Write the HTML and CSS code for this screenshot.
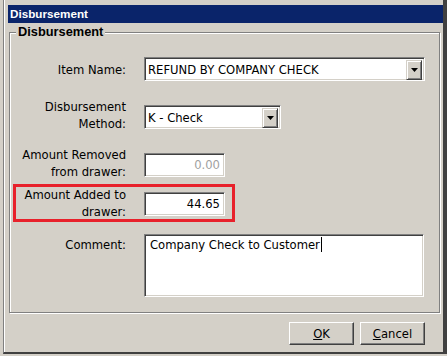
FILE: index.html
```html
<!DOCTYPE html>
<html lang="en">
<head>
    <meta charset="UTF-8">
    <title>Disbursement</title>
    <link rel="stylesheet" href="styles.css">
</head>
<body>

    <div class="window">
        <div class="titlebar">Disbursement</div>

        <fieldset class="group">
            <legend>Disbursement</legend>

            <div class="row row-single">
                <label class="label">Item Name:</label>
                <div class="select sunken item-select">
                    <span class="select-text">REFUND BY COMPANY CHECK</span>
                    <span class="drop-btn"><svg width="7" height="4" viewBox="0 0 7 4"><polygon points="0,0 7,0 3.5,4" fill="#000"/></svg></span>
                </div>
            </div>

            <div class="row row-double">
                <label class="label">Disbursement<br>Method:</label>
                <div class="select sunken method-select">
                    <span class="select-text">K - Check</span>
                    <span class="drop-btn"><svg width="7" height="4" viewBox="0 0 7 4"><polygon points="0,0 7,0 3.5,4" fill="#000"/></svg></span>
                </div>
            </div>

            <div class="row row-double row-removed">
                <label class="label">Amount Removed<br>from drawer:</label>
                <div class="field sunken disabled">0.00</div>
            </div>

            <div class="row row-double row-added">
                <span class="highlight"></span>
                <label class="label">Amount Added to<br>drawer:</label>
                <div class="field sunken">44.65</div>
            </div>

            <div class="row row-comment">
                <label class="label">Comment:</label>
                <div class="memo sunken">Company Check to Customer<span class="caret"></span></div>
            </div>
        </fieldset>

        <div class="buttons">
            <button class="btn"><u>O</u>K</button>
            <button class="btn"><u>C</u>ancel</button>
        </div>
    </div>

</body>
</html>
```

FILE: styles.css
```css
/* Page */
body {
    margin: 0;
    background: #d4d0c8;
    font-family: "DejaVu Sans", Verdana, sans-serif;
    font-size: 11.6px;
    color: #000;
}

/* Window frame */
.window {
    box-sizing: border-box;
    width: 444px;
    height: 354px;
    margin-left: 3px;
    padding: 5px 0 0 4px;
    background: #d4d0c8;
    border-left: 1px solid #808080;
    border-right: 4px solid #404040;
    border-bottom: 2px solid #404040;
    box-shadow: inset 1px 0 0 #fff;
}

.titlebar {
    height: 18px;
    line-height: 18px;
    padding-left: 2px;
    background: #0a246a;
    color: #fff;
    font-family: "Liberation Sans", Arial, sans-serif;
    font-weight: bold;
    font-size: 11.7px;
}

/* Group box */
.group {
    margin: 1px 3px 0 1px;
    padding: 17px 0 15px 0;
    border: 1px solid #808080;
    box-shadow: inset 1px 1px 0 #fff, 1px 1px 0 #fff;
    min-width: 0;
}

.group legend {
    margin-left: 6px;
    padding: 0 2px;
    line-height: 16px;
    font-family: "Liberation Sans", Arial, sans-serif;
    font-weight: bold;
    font-size: 12.8px;
    background: #d4d0c8;
}

/* Rows */
.row {
    display: flex;
    align-items: center;
    position: relative;
}

.label {
    width: 116px;
    margin-right: 18px;
    text-align: right;
    line-height: 17px;
}

.row-single {
    align-items: flex-start;
}

.row-single .label {
    margin-top: 5px;
}

.row-double {
    margin-top: 16px;
}

.row-double .label {
    margin-top: 2px;
    margin-bottom: 4px;
}

.row-removed {
    margin-top: 8px;
}

.row-added {
    margin-top: 0;
}

.row-added .label {
    margin-top: 2px;
    margin-bottom: 2px;
}

.row-comment {
    margin-top: 11px;
    align-items: flex-start;
}

.row-comment .label {
    margin-top: 3px;
}

/* Red annotation box */
.highlight {
    position: absolute;
    top: -1px;
    left: 3px;
    width: 222px;
    height: 38px;
    box-sizing: border-box;
    border: 3px solid #e8212b;
}

/* Fields */
.sunken {
    box-sizing: border-box;
    background: #fff;
    border: 1px solid;
    border-color: #808080 #fff #fff #808080;
    box-shadow: inset 1px 1px 0 #404040, inset -1px -1px 0 #d4d0c8;
}

.select {
    display: flex;
    height: 24px;
    padding: 2px;
}

.item-select { width: 281px; }
.method-select { width: 137px; }

.select-text {
    flex: 1;
    padding-left: 1px;
    line-height: 20px;
    white-space: nowrap;
    overflow: hidden;
}

.drop-btn {
    box-sizing: border-box;
    width: 16px;
    height: 20px;
    display: flex;
    justify-content: center;
    align-items: center;
    background: #d4d0c8;
    border: 1px solid;
    border-color: #d4d0c8 #404040 #404040 #d4d0c8;
    box-shadow: inset 1px 1px 0 #fff, inset -1px -1px 0 #808080;
}

.field {
    width: 81px;
    height: 24px;
    padding: 0 4px;
    line-height: 22px;
    text-align: right;
}

.disabled {
    color: #a0a0a0;
}

.memo {
    width: 280px;
    height: 63px;
    padding: 2px 5px;
    line-height: 17px;
}

.caret {
    display: inline-block;
    width: 1px;
    height: 15px;
    margin-left: 1px;
    background: #000;
    vertical-align: -3px;
}

/* Buttons */
.buttons {
    display: flex;
    justify-content: flex-end;
    gap: 6px;
    margin: 9px 18px 0 0;
}

.btn {
    box-sizing: border-box;
    width: 65px;
    height: 23px;
    padding: 0;
    background: #d4d0c8;
    font-family: "DejaVu Sans", Verdana, sans-serif;
    font-size: 11.6px;
    color: #000;
    border: 1px solid;
    border-color: #fff #404040 #404040 #fff;
    box-shadow: inset -1px -1px 0 #808080;
}
```
